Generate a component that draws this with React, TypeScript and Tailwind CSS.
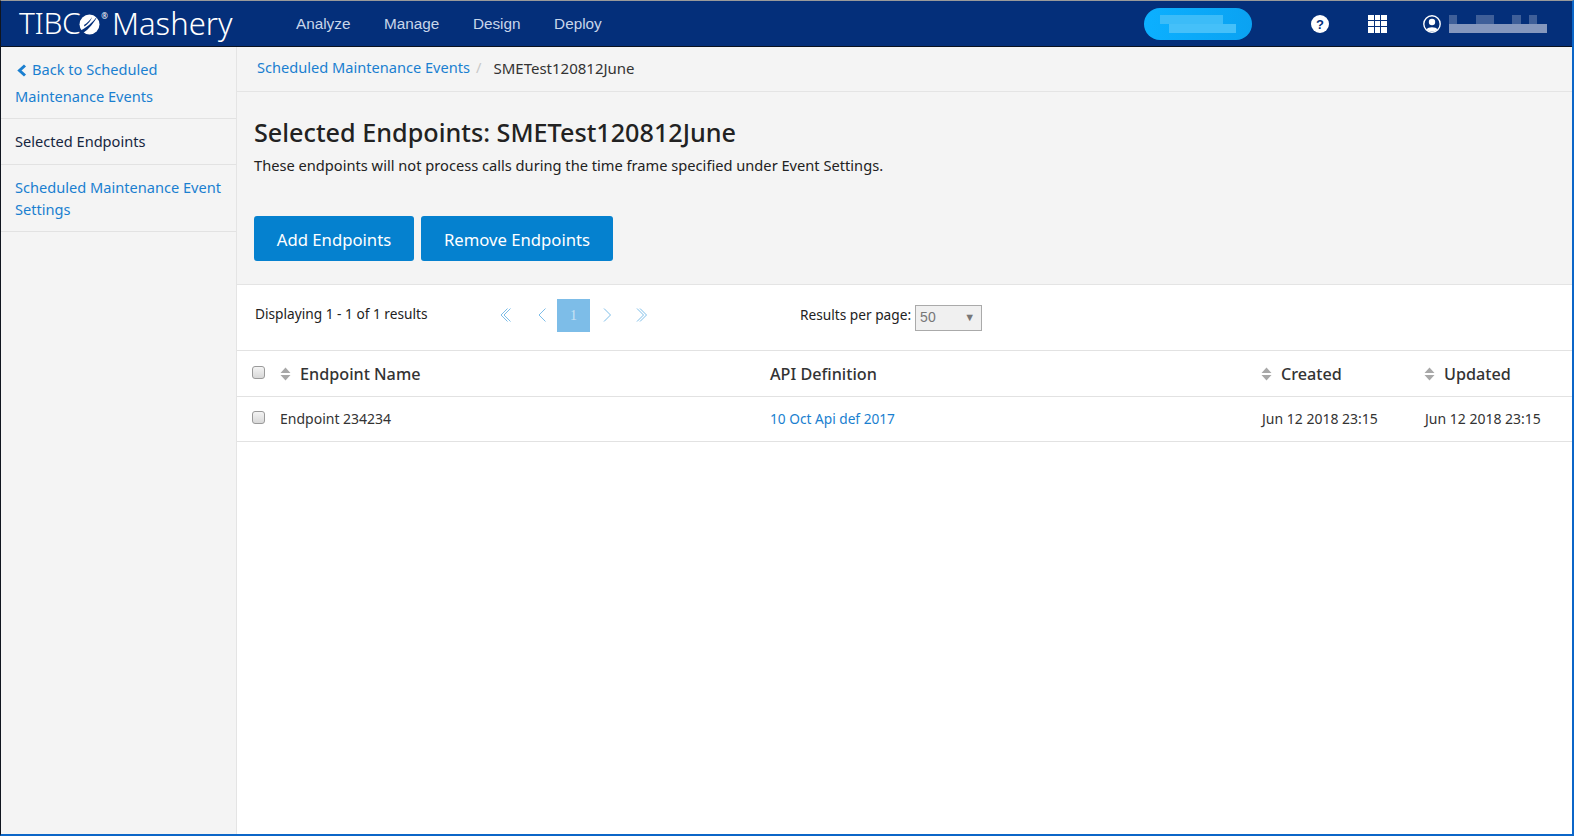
function SortArrows() {
  return (
    <svg width="11" height="14" viewBox="0 0 11 14" className="shrink-0">
      <path d="M5.5 0.5 L10.5 6 H0.5 Z M0.5 8 H10.5 L5.5 13.5 Z" fill="#a8a8a8" />
    </svg>
  );
}

function Check() {
  return (
    <span className="block w-[13px] h-[13px] rounded-[3px] border border-[#9a9a9a] bg-gradient-to-b from-[#f4f4f4] to-[#d8d8d8]" />
  );
}

// thin pager arrows, double = second chevron next to the first
function Pager({ dir, double }: { dir: "left" | "right"; double?: boolean }) {
  const d = dir === "left" ? "M7.5 0.5 L1 7 L7.5 13.5" : "M1 0.5 L7.5 7 L1 13.5";
  const d2 = dir === "left" ? "M10.5 0.5 L4 7 L10.5 13.5" : "M4 0.5 L10.5 7 L4 13.5";
  return (
    <svg width={double ? 11 : 8} height="14" viewBox={double ? "0 0 11 14" : "0 0 8 14"} fill="none" stroke="#7dbde8">
      <path d={d} />
      {double && <path d={d2} />}
    </svg>
  );
}

function Logo() {
  return (
    <div className="flex items-start text-white leading-none select-none">
      <span className="text-[30px] tracking-[-0.4px] font-light">TIBC</span>
      <svg width="21" height="21" viewBox="0 0 21 21" className="mt-[6px] -ml-[1px]">
        <circle cx="10.5" cy="10.5" r="10" fill="#fff" />
        <path d="M1 17 C7 14 13 9 19 1.5 C15 9 10 15 4 19 Z" fill="#042f7a" />
        <path d="M5 11 C8 9 11 6.5 13 3 C12 7 9 10 5.5 12.5 Z" fill="#042f7a" />
      </svg>
      <span className="text-[8px] mt-[4px] ml-[1px]">®</span>
      <span className="text-[31px] font-light ml-[4px]">Mashery</span>
    </div>
  );
}

export default function App() {
  return (
    <div
      className="h-screen flex flex-col overflow-hidden bg-white border-l border-l-[#10151f] border-r-2 border-r-[#0b66c8] border-b-2 border-b-[#0b66c8] border-t border-t-[#9a9a9a] text-[#222] text-[14.6px]"
      style={{ fontFamily: '"Noto Sans", "Liberation Sans", sans-serif' }}
    >
      <header className="h-[46px] shrink-0 flex items-center bg-[#042f7a] border-b border-b-[#0a1220]">
        <div className="w-[295px] pl-[18px] shrink-0">
          <Logo />
        </div>
        <nav
          className="flex gap-[33.6px] pt-[2px] text-[15.3px] text-[#c9d6ea]"
          style={{ fontFamily: '"Liberation Sans", sans-serif' }}
        >
          <span>Analyze</span>
          <span>Manage</span>
          <span>Design</span>
          <span>Deploy</span>
        </nav>
        <div className="ml-auto flex items-center">
          <div className="w-[108px] h-[32px] rounded-full bg-gradient-to-r from-[#0cb0ff] to-[#0aa2f2] flex flex-col items-center justify-center mr-[59px]">
            <div className="w-[76px] h-[9px] pr-[13px]"><div className="h-full bg-[#3cbcf8]" /></div>
            <div className="w-[76px] h-[9px] pl-[9px]"><div className="h-full bg-[#45c0f9]" /></div>
          </div>
          <svg width="18" height="18" viewBox="0 0 18 18" className="mr-[39px]">
            <circle cx="9" cy="9" r="9" fill="#fff" />
            <text x="9" y="13.5" textAnchor="middle" fontSize="13" fontWeight="700" fill="#042f7a" fontFamily="Liberation Sans">?</text>
          </svg>
          <div className="grid grid-cols-3 gap-[1px] w-[19px] h-[18px] mr-[36px]">
            {Array.from({ length: 9 }).map((_, i) => (
              <span key={i} className="bg-white" />
            ))}
          </div>
          <svg width="18" height="18" viewBox="0 0 18 18" className="mr-[8px]">
            <circle cx="9" cy="9" r="8.2" fill="none" stroke="#fff" strokeWidth="1.4" />
            <circle cx="9" cy="7" r="3.2" fill="#fff" />
            <path d="M3.5 14.5 C5 11.5 13 11.5 14.5 14.5 C12 17 6 17 3.5 14.5 Z" fill="#fff" />
          </svg>
          <div className="w-[98px] mr-[25px] flex flex-col">
            <div className="h-[9px] flex">
              <span className="w-[8px] bg-[#3f5f99]" />
              <span className="w-[18px] ml-[19px] bg-[#3f5f99]" />
              <span className="w-[9px] ml-[18px] bg-[#3f5f99]" />
              <span className="w-[8px] ml-[8px] bg-[#3f5f99]" />
            </div>
            <div className="h-[9px] bg-[#8597bd]" />
          </div>
        </div>
      </header>

      <div className="flex-1 flex min-h-0">
        <aside className="w-[236px] shrink-0 bg-[#f4f4f4] border-r border-r-[#e4e4e4] text-[#1a7fd0]">
          <div className="px-[14px] pt-[9px] pb-[8px] leading-[27px] border-b border-b-[#e2e2e2]">
            <svg width="11" height="13" viewBox="0 0 11 13" className="inline-block mr-[5px] ml-[1px] -mt-[2px]" fill="none" stroke="#1a7fd0" strokeWidth="3">
              <path d="M9 1.5 L3.5 6.5 L9 11.5" />
            </svg>
            Back to Scheduled Maintenance Events
          </div>
          <div className="px-[14px] py-[11px] leading-[23px] text-[#16263f] border-b border-b-[#e2e2e2]">
            Selected Endpoints
          </div>
          <div className="pl-[14px] pr-[8px] py-[11px] leading-[22px] border-b border-b-[#e2e2e2]">
            Scheduled Maintenance Event Settings
          </div>
        </aside>

        <main className="flex-1 min-w-0 flex flex-col">
          <div className="bg-[#f4f4f4] border-b border-b-[#e4e4e4]">
            <div className="h-[45px] flex items-center pl-[20px] pb-[2px] border-b border-b-[#e4e4e4]">
              <span className="text-[#1a7fd0]">Scheduled Maintenance Events</span>
              <span className="text-[#c8c8c8] ml-[6px] mr-[12px]">/</span>
              <span className="text-[#333] text-[15px]">SMETest120812June</span>
            </div>
            <div className="pl-[17px] pt-[24px] pb-[23px]">
              <h1 className="text-[25.2px] leading-[32px] font-medium text-[#222]">Selected Endpoints: SMETest120812June</h1>
              <p className="text-[14.65px] leading-[20px] mt-[7px] text-[#222]">
                These endpoints will not process calls during the time frame specified under Event Settings.
              </p>
              <div className="flex gap-[7px] mt-[41px]">
                <button className="h-[45px] w-[160px] pt-[3px] rounded-[3px] bg-[#0581cf] text-white text-[16.7px]">Add Endpoints</button>
                <button className="h-[45px] w-[192px] pt-[3px] rounded-[3px] bg-[#0581cf] text-white text-[16.7px]">Remove Endpoints</button>
              </div>
            </div>
          </div>

          <div className="h-[66px] flex items-center border-b border-b-[#e2e2e2] pl-[18px] text-[13.7px]">
            <span className="w-[245px] shrink-0 -mt-[6px]">Displaying 1 - 1 of 1 results</span>
            <div className="flex items-center -mt-[5px]">
              <Pager dir="left" double />
              <span className="ml-[27px] mr-[11px] flex"><Pager dir="left" /></span>
              <span
                className="w-[33px] h-[33px] bg-[#7dbde8] text-[#c9e3f5] flex items-center justify-center text-[14px]"
                style={{ fontFamily: '"Liberation Serif", serif' }}
              >
                1
              </span>
              <span className="ml-[13px] mr-[25px] flex"><Pager dir="right" /></span>
              <Pager dir="right" double />
            </div>
            <span className="ml-[153px] -mt-[4px]">Results per page:</span>
            <div
              className="ml-[4px] w-[67px] h-[26px] border border-[#aaa] bg-[#f0f0f0] text-[#777] text-[14px] flex items-center justify-between pl-[4px] pr-[6px]"
              style={{ fontFamily: '"Liberation Sans", sans-serif' }}
            >
              <span>50</span>
              <span className="text-[11px]">▼</span>
            </div>
          </div>

          <div className="grid grid-cols-[533px_491px_163px_1fr] h-[46px] pt-[2px] items-center border-b border-b-[#e2e2e2] text-[16.2px] font-medium text-[#333]">
            <div className="flex items-center pl-[15px]">
              <span className="-mt-[4px]"><Check /></span>
              <span className="ml-[15px]"><SortArrows /></span>
              <span className="ml-[9px]">Endpoint Name</span>
            </div>
            <div>API Definition</div>
            <div className="flex items-center gap-[9px]"><SortArrows />Created</div>
            <div className="flex items-center gap-[9px]"><SortArrows />Updated</div>
          </div>

          <div className="grid grid-cols-[533px_491px_163px_1fr] h-[45px] pb-[2px] items-center border-b border-b-[#e2e2e2] text-[14px] text-[#333]">
            <div className="flex items-center pl-[15px]">
              <span className="-mt-[2px]"><Check /></span>
              <span className="ml-[15px]">Endpoint 234234</span>
            </div>
            <div className="text-[#1a7fd0] text-[13.7px] pt-[2px]">10 Oct Api def 2017</div>
            <div className="pl-[1px]">Jun 12 2018 23:15</div>
            <div className="pl-[1px]">Jun 12 2018 23:15</div>
          </div>
        </main>
      </div>
    </div>
  );
}
